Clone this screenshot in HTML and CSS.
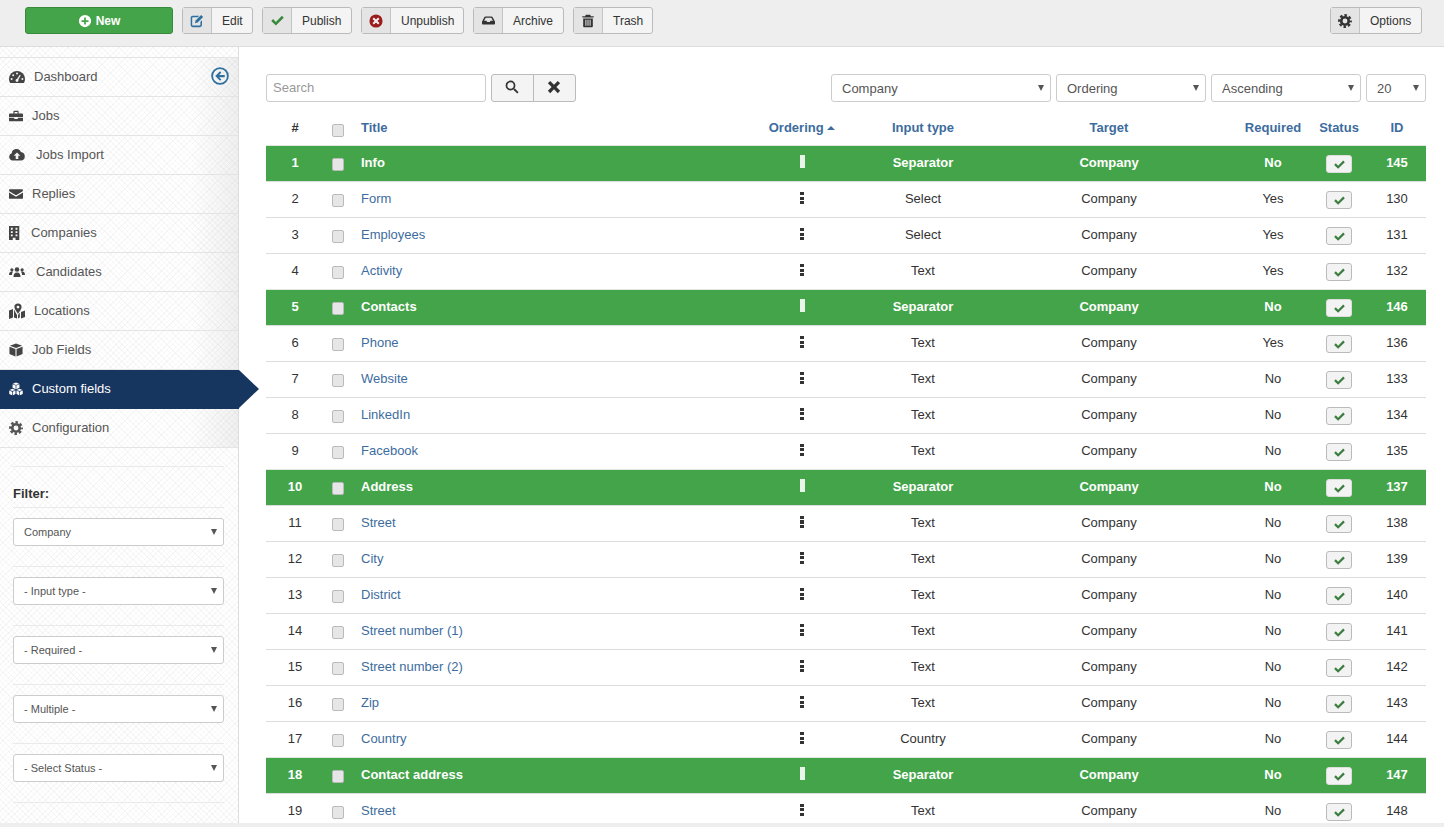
FILE: index.html
```html
<!DOCTYPE html>
<html lang="en">
<head>
<meta charset="utf-8">
<title>Custom fields</title>
<link rel="stylesheet" href="styles.css">
</head>
<body>
<svg class="defs" aria-hidden="true">
  <symbol id="i-dash" viewBox="0 0 16 16" preserveAspectRatio="xMinYMid"><path d="M8 2A8 8 0 0 0 0 10c0 1.500.4 2.900 1.100 4h13.800c.7-1.100 1.100-2.500 1.100-4A8 8 0 0 0 8 2z"/><g class="hole"><circle cx="8" cy="4.600" r="1"/><circle cx="4.200" cy="6.200" r="1"/><circle cx="2.600" cy="10" r="1"/><circle cx="13.400" cy="10" r="1"/><circle cx="8" cy="11.500" r="1.400"/><path d="M7.300 11l3.500-5.300.9.500-2.900 5.600z"/></g></symbol>
  <symbol id="i-jobs" viewBox="0 0 16 16" preserveAspectRatio="xMinYMid"><path d="M1 5h14a1 1 0 0 1 1 1v3H0V6a1 1 0 0 1 1-1zM0 10h6v1.500h4V10h6v3a1 1 0 0 1-1 1H1a1 1 0 0 1-1-1zM5 5V3.200C5 2.500 5.500 2 6.200 2h3.600c.7 0 1.200.5 1.200 1.200V5H9.700V3.300H6.300V5z"/></symbol>
  <symbol id="i-cloud" viewBox="0 0 16 16" preserveAspectRatio="xMinYMid"><path d="M3.700 13.500a3.700 3.700 0 0 1-1-7.200 4.800 4.800 0 0 1 9.200-1.300 4.300 4.300 0 0 1 .4 8.500z"/><path class="hole" d="M8 5.500l3.300 3.300H9.300V12H6.700V8.800H4.700z"/></symbol>
  <symbol id="i-mail" viewBox="0 0 16 16" preserveAspectRatio="xMinYMid"><path d="M1.200 2.500h13.600c.7 0 1.200.5 1.200 1.200 0 .6-.4 1-.8 1.300L8.600 9.100c-.4.2-.8.200-1.200 0L.8 5C.4 4.700 0 4.300 0 3.700c0-.7.5-1.200 1.200-1.200zM0 6.200l7 4.300c.6.4 1.400.4 2 0l7-4.300v6.300c0 .6-.5 1-1.200 1H1.200c-.7 0-1.200-.4-1.200-1z"/></symbol>
  <symbol id="i-build" viewBox="2.500 .5 11 15" preserveAspectRatio="xMinYMid"><path fill-rule="evenodd" d="M2.500 .5h11v15H9.500v-2.500h-3v2.500h-4zM4.500 2.500v2h2v-2zM9.500 2.500v2h2v-2zM4.500 6v2h2V6zM9.500 6v2h2V6zM4.500 9.500v2h2v-2zM9.500 9.500v2h2v-2z"/></symbol>
  <symbol id="i-users" viewBox="0 0 16 16" preserveAspectRatio="xMinYMid"><circle cx="8" cy="5.500" r="2.300"/><circle cx="2.900" cy="5.800" r="1.600"/><circle cx="13.100" cy="5.800" r="1.600"/><path d="M4.500 13c0-3 1-4.500 3.500-4.500s3.500 1.500 3.500 4.500zM0 11c0-2.300.8-3.600 3-3.500.5 0 .8.100 1 .3-.8.800-1 2-1 3.200zM16 11c0-2.300-.8-3.600-3-3.500-.5 0-.8.100-1 .3.800.8 1 2 1 3.200z"/></symbol>
  <symbol id="i-map" viewBox="0 0 16 16" preserveAspectRatio="xMinYMid"><path d="M0 7.500l4-1.500v8.500L0 16zM5 6.500l1.500 3 1.500 2.500v3.500L5 14.500zM9 12l1.800-2.500V14.500L9 15.500zM12 9l4-1.500V14l-4 1.500z"/><path fill-rule="evenodd" d="M9 .5a3.600 3.600 0 0 1 3.600 3.600c0 1.800-2.100 4.700-3.600 6.600-1.500-1.900-3.600-4.800-3.600-6.600A3.600 3.600 0 0 1 9 .5zM9 2.700a1.400 1.400 0 1 0 0 2.800 1.400 1.400 0 0 0 0-2.800z"/></symbol>
  <symbol id="i-cube" viewBox="0 0 16 16" preserveAspectRatio="xMinYMid"><path d="M8 .5l7 2.500L8 5.600 1 3zM.5 4.200l6.900 2.600v8.700L.5 12.500zM15.500 4.200v8.300l-6.900 3V6.800z"/></symbol>
  <symbol id="i-cubes" viewBox="0 0 16 16" preserveAspectRatio="xMinYMid"><path d="M8 .5l3.600 1.400L8 3.300 4.400 1.900zM4.100 2.700l3.500 1.300v4.200L4.100 6.700zM11.900 2.700v4l-3.500 1.500V4zM4 7.700l3.300 1.300L4 10.300.7 9zM.3 9.800l3.300 1.300v3.900L.3 13.600zM7.400 9.800v3.800L4.400 15v-3.900zM12 7.700L15.300 9 12 10.300 8.700 9zM8.600 9.800l3 1.300v3.900l-3-1.400zM15.700 9.800v3.800L12.400 15v-3.900z"/></symbol>
  <symbol id="i-cog" viewBox="0 0 16 16" preserveAspectRatio="xMinYMid"><circle cx="8" cy="8" r="4.300" fill="none" stroke="currentColor" stroke-width="3"/><circle cx="8" cy="8" r="6.600" fill="none" stroke="currentColor" stroke-width="2.600" stroke-dasharray="2.900 2.284" stroke-dashoffset="1.450"/></symbol>
  <symbol id="i-back" viewBox="0 0 16 16"><circle cx="8" cy="8" r="7" fill="none" stroke="currentColor" stroke-width="1.600"/><path d="M8 3.800l1.200 1.200-2 2h5v2h-5l2 2L8 12.200 3.800 8z"/></symbol>
  <symbol id="i-plus" viewBox="0 0 16 16"><path fill-rule="evenodd" d="M8 1a7 7 0 1 1 0 14A7 7 0 0 1 8 1zM7 4v3H4v2h3v3h2V9h3V7H9V4z"/></symbol>
  <symbol id="i-edit" viewBox="0 0 16 16"><path d="M3 2h7.500L9 3.800H3.200c-.4 0-.7.300-.7.700v8c0 .4.300.7.700.7h8c.4 0 .7-.3.700-.7V8.800l1.800-1.700v5.600C13.700 14 12.700 15 11.500 15H3C1.800 15 .8 14 .8 12.700V4.200C.8 3 1.800 2 3 2z"/><path d="M12.700 1.200l2.300 2.300-6.300 6.300-3 .7.700-3z"/></symbol>
  <symbol id="i-check" viewBox="0 0 16 16"><path d="M2.600 6.300l3.400 3.400 7.400-7.400 2.300 2.300L6 14.300.3 8.600z"/></symbol>
  <symbol id="i-xc" viewBox="0 0 16 16"><circle cx="8" cy="8" r="7.500"/><path class="hole-w" d="M5.600 4l2.400 2.400L10.400 4 12 5.600 9.600 8l2.400 2.400-1.600 1.600L8 9.600 5.600 12 4 10.400 6.400 8 4 5.600z"/></symbol>
  <symbol id="i-arch" viewBox="0 0 16 16"><path fill-rule="evenodd" d="M4.300 3h7.400c.6 0 1 .3 1.300.8L15.600 8.500c.3.400.4.800.4 1.200V12c0 .6-.5 1-1 1H1c-.5 0-1-.4-1-1V9.700c0-.4.100-.8.400-1.200L3 3.800c.3-.5.700-.8 1.300-.8zM4.600 4.500L2.500 8.300h3l.9 1.500h3.200l.9-1.500h3l-2.100-3.800z"/></symbol>
  <symbol id="i-trash" viewBox="0 0 16 16"><path fill-rule="evenodd" d="M5.500 .8h5l.8 1.700h3.200V4h-13V2.500h3.200zM2.500 5h11v9c0 .8-.6 1.200-1.200 1.200H3.700c-.6 0-1.200-.4-1.200-1.200zM5 6.500v7h1.200v-7zM7.400 6.500v7h1.200v-7zM9.800 6.500v7H11v-7z"/></symbol>
  <symbol id="i-search" viewBox="0 0 16 16"><circle cx="6.300" cy="6.300" r="4.600" fill="none" stroke="currentColor" stroke-width="2"/><path d="M9.500 11l1.500-1.500 4.500 4.500-1.500 1.500z"/></symbol>
  <symbol id="i-x" viewBox="0 0 16 16"><path d="M3.700 1L8 5.300 12.300 1 15 3.700 10.700 8l4.300 4.300-2.700 2.700L8 10.700 3.700 15 1 12.300 5.300 8 1 3.700z"/></symbol>
</svg>

<header class="toolbar">
  <button class="new-btn"><svg class="ic-14"><use href="#i-plus"/></svg>New</button>
  <button class="tb-btn bw-edit"><span class="tb-ic c-blue"><svg class="ic-14"><use href="#i-edit"/></svg></span><span class="tb-tx">Edit</span></button>
  <button class="tb-btn bw-pub"><span class="tb-ic c-green"><svg class="ic-13"><use href="#i-check"/></svg></span><span class="tb-tx">Publish</span></button>
  <button class="tb-btn bw-unp"><span class="tb-ic c-red"><svg class="ic-14"><use href="#i-xc"/></svg></span><span class="tb-tx">Unpublish</span></button>
  <button class="tb-btn bw-arc"><span class="tb-ic"><svg class="ic-13"><use href="#i-arch"/></svg></span><span class="tb-tx">Archive</span></button>
  <button class="tb-btn bw-tra"><span class="tb-ic"><svg class="ic-14"><use href="#i-trash"/></svg></span><span class="tb-tx">Trash</span></button>
  <button class="tb-btn bw-opt options"><span class="tb-ic"><svg class="ic-14"><use href="#i-cog"/></svg></span><span class="tb-tx">Options</span></button>
</header>

<div class="main">
  <aside class="sidebar">
    <nav class="menu">
      <a class="menu-item"><svg class="mi w15"><use href="#i-dash"/></svg>Dashboard<svg class="collapse"><use href="#i-back"/></svg></a>
      <a class="menu-item"><svg class="mi w13"><use href="#i-jobs"/></svg>Jobs</a>
      <a class="menu-item"><svg class="mi w17"><use href="#i-cloud"/></svg>Jobs Import</a>
      <a class="menu-item"><svg class="mi w13"><use href="#i-mail"/></svg>Replies</a>
      <a class="menu-item"><svg class="mi w12"><use href="#i-build"/></svg>Companies</a>
      <a class="menu-item"><svg class="mi w17"><use href="#i-users"/></svg>Candidates</a>
      <a class="menu-item"><svg class="mi w15"><use href="#i-map"/></svg>Locations</a>
      <a class="menu-item"><svg class="mi w13"><use href="#i-cube"/></svg>Job Fields</a>
      <a class="menu-item active"><svg class="mi w13"><use href="#i-cubes"/></svg>Custom fields</a>
      <a class="menu-item"><svg class="mi w13"><use href="#i-cog"/></svg>Configuration</a>
    </nav>
    <div class="filters">
      <h4 class="filter-title">Filter:</h4>
      <div class="filter-group"><div class="sel sel-side"><select><option>Company</option></select></div></div>
      <div class="filter-group"><div class="sel sel-side"><select><option>- Input type -</option></select></div></div>
      <div class="filter-group"><div class="sel sel-side"><select><option>- Required -</option></select></div></div>
      <div class="filter-group"><div class="sel sel-side"><select><option>- Multiple -</option></select></div></div>
      <div class="filter-group"><div class="sel sel-side"><select><option>- Select Status -</option></select></div></div>
      <div class="filter-end"></div>
    </div>
  </aside>

  <main class="content">
    <div class="search-row">
      <input class="search" type="text" placeholder="Search">
      <div class="search-btns">
        <button class="sb"><svg class="ic-14"><use href="#i-search"/></svg></button>
        <button class="sb"><svg class="ic-14"><use href="#i-x"/></svg></button>
      </div>
      <div class="sorts">
        <div class="sel w220"><select><option>Company</option></select></div>
        <div class="sel w150"><select><option>Ordering</option></select></div>
        <div class="sel w150"><select><option>Ascending</option></select></div>
        <div class="sel w60"><select><option>20</option></select></div>
      </div>
    </div>

    <table class="grid">
      <colgroup>
        <col class="c-num"><col class="c-chk"><col class="c-title"><col class="c-ord"><col class="c-type"><col class="c-target"><col class="c-req"><col class="c-st"><col class="c-id">
      </colgroup>
      <thead>
        <tr>
          <th>#</th><th><input class="cb" type="checkbox"></th><th class="left">Title</th><th>Ordering <i class="caret"></i></th><th>Input type</th><th>Target</th><th>Required</th><th>Status</th><th>ID</th>
        </tr>
      </thead>
      <tbody>
        <tr class="sep"><td>1</td><td><input class="cb" type="checkbox"></td><td class="left">Info</td><td><i class="drag"></i></td><td>Separator</td><td>Company</td><td>No</td><td><span class="st"><svg><use href="#i-check"/></svg></span></td><td>145</td></tr>
        <tr><td>2</td><td><input class="cb" type="checkbox"></td><td class="left"><a>Form</a></td><td><i class="drag"></i></td><td>Select</td><td>Company</td><td>Yes</td><td><span class="st"><svg><use href="#i-check"/></svg></span></td><td>130</td></tr>
        <tr><td>3</td><td><input class="cb" type="checkbox"></td><td class="left"><a>Employees</a></td><td><i class="drag"></i></td><td>Select</td><td>Company</td><td>Yes</td><td><span class="st"><svg><use href="#i-check"/></svg></span></td><td>131</td></tr>
        <tr><td>4</td><td><input class="cb" type="checkbox"></td><td class="left"><a>Activity</a></td><td><i class="drag"></i></td><td>Text</td><td>Company</td><td>Yes</td><td><span class="st"><svg><use href="#i-check"/></svg></span></td><td>132</td></tr>
        <tr class="sep"><td>5</td><td><input class="cb" type="checkbox"></td><td class="left">Contacts</td><td><i class="drag"></i></td><td>Separator</td><td>Company</td><td>No</td><td><span class="st"><svg><use href="#i-check"/></svg></span></td><td>146</td></tr>
        <tr><td>6</td><td><input class="cb" type="checkbox"></td><td class="left"><a>Phone</a></td><td><i class="drag"></i></td><td>Text</td><td>Company</td><td>Yes</td><td><span class="st"><svg><use href="#i-check"/></svg></span></td><td>136</td></tr>
        <tr><td>7</td><td><input class="cb" type="checkbox"></td><td class="left"><a>Website</a></td><td><i class="drag"></i></td><td>Text</td><td>Company</td><td>No</td><td><span class="st"><svg><use href="#i-check"/></svg></span></td><td>133</td></tr>
        <tr><td>8</td><td><input class="cb" type="checkbox"></td><td class="left"><a>LinkedIn</a></td><td><i class="drag"></i></td><td>Text</td><td>Company</td><td>No</td><td><span class="st"><svg><use href="#i-check"/></svg></span></td><td>134</td></tr>
        <tr><td>9</td><td><input class="cb" type="checkbox"></td><td class="left"><a>Facebook</a></td><td><i class="drag"></i></td><td>Text</td><td>Company</td><td>No</td><td><span class="st"><svg><use href="#i-check"/></svg></span></td><td>135</td></tr>
        <tr class="sep"><td>10</td><td><input class="cb" type="checkbox"></td><td class="left">Address</td><td><i class="drag"></i></td><td>Separator</td><td>Company</td><td>No</td><td><span class="st"><svg><use href="#i-check"/></svg></span></td><td>137</td></tr>
        <tr><td>11</td><td><input class="cb" type="checkbox"></td><td class="left"><a>Street</a></td><td><i class="drag"></i></td><td>Text</td><td>Company</td><td>No</td><td><span class="st"><svg><use href="#i-check"/></svg></span></td><td>138</td></tr>
        <tr><td>12</td><td><input class="cb" type="checkbox"></td><td class="left"><a>City</a></td><td><i class="drag"></i></td><td>Text</td><td>Company</td><td>No</td><td><span class="st"><svg><use href="#i-check"/></svg></span></td><td>139</td></tr>
        <tr><td>13</td><td><input class="cb" type="checkbox"></td><td class="left"><a>District</a></td><td><i class="drag"></i></td><td>Text</td><td>Company</td><td>No</td><td><span class="st"><svg><use href="#i-check"/></svg></span></td><td>140</td></tr>
        <tr><td>14</td><td><input class="cb" type="checkbox"></td><td class="left"><a>Street number (1)</a></td><td><i class="drag"></i></td><td>Text</td><td>Company</td><td>No</td><td><span class="st"><svg><use href="#i-check"/></svg></span></td><td>141</td></tr>
        <tr><td>15</td><td><input class="cb" type="checkbox"></td><td class="left"><a>Street number (2)</a></td><td><i class="drag"></i></td><td>Text</td><td>Company</td><td>No</td><td><span class="st"><svg><use href="#i-check"/></svg></span></td><td>142</td></tr>
        <tr><td>16</td><td><input class="cb" type="checkbox"></td><td class="left"><a>Zip</a></td><td><i class="drag"></i></td><td>Text</td><td>Company</td><td>No</td><td><span class="st"><svg><use href="#i-check"/></svg></span></td><td>143</td></tr>
        <tr><td>17</td><td><input class="cb" type="checkbox"></td><td class="left"><a>Country</a></td><td><i class="drag"></i></td><td>Country</td><td>Company</td><td>No</td><td><span class="st"><svg><use href="#i-check"/></svg></span></td><td>144</td></tr>
        <tr class="sep"><td>18</td><td><input class="cb" type="checkbox"></td><td class="left">Contact address</td><td><i class="drag"></i></td><td>Separator</td><td>Company</td><td>No</td><td><span class="st"><svg><use href="#i-check"/></svg></span></td><td>147</td></tr>
        <tr><td>19</td><td><input class="cb" type="checkbox"></td><td class="left"><a>Street</a></td><td><i class="drag"></i></td><td>Text</td><td>Company</td><td>No</td><td><span class="st"><svg><use href="#i-check"/></svg></span></td><td>148</td></tr>
      </tbody>
    </table>
  </main>
</div>
<footer class="foot"></footer>
</body>
</html>
```

FILE: styles.css
```css
* { box-sizing: border-box; }
html, body { margin: 0; height: 100%; }
body {
  height: 827px;
  overflow: hidden;
  display: flex;
  flex-direction: column;
  font: 13px/18px "Liberation Sans", Arial, sans-serif;
  color: #333;
  background: #fff;
}
.defs { display: none; }
.hole { fill: #f5f5f5; }
.hole-w { fill: #f0f0f0; }
button { font-family: inherit; }

/* toolbar */
.toolbar {
  flex: none;
  height: 47px;
  display: flex;
  align-items: flex-start;
  gap: 9px;
  padding: 7px 22px 0 25px;
  background: #eee;
  border-bottom: 1px solid #ddd;
}
.new-btn {
  width: 148px;
  height: 27px;
  display: flex;
  align-items: center;
  justify-content: center;
  gap: 4px;
  padding: 0;
  background: #44a449;
  border: 1px solid #3a8a3e;
  border-radius: 3px;
  color: #fff;
  font-size: 12px;
  font-weight: bold;
}
.new-btn svg { fill: #fff; }
.tb-btn {
  height: 27px;
  display: flex;
  align-items: stretch;
  padding: 0;
  background: #f4f4f4;
  border: 1px solid #bbb;
  border-radius: 3px;
  color: #333;
  font-size: 12px;
}
.bw-edit { width: 71px; }
.bw-pub { width: 90px; }
.bw-unp { width: 103px; }
.bw-arc { width: 91px; }
.bw-tra { width: 80px; }
.bw-opt { width: 92px; }
.tb-ic {
  flex: none;
  width: 29px;
  display: flex;
  align-items: center;
  justify-content: center;
  background: #e4e4e4;
  border-right: 1px solid #c4c4c4;
  color: #333;
  fill: currentColor;
}
.tb-tx { padding: 0 0 0 10px; line-height: 26px; }
.options { margin-left: auto; }
.c-blue { color: #2f6f9f; }
.c-green { color: #3a8a3e; }
.c-red { color: #9b1c1c; }
.ic-14 { width: 14px; height: 14px; }
.ic-13 { width: 13px; height: 13px; }

/* layout */
.main { flex: 1; min-height: 0; display: flex; overflow: hidden; }
.foot { flex: none; height: 4px; background: #eee; }

/* sidebar */
.sidebar {
  flex: none;
  width: 239px;
  position: relative;
  z-index: 2;
  padding-top: 10px;
  border-right: 1px solid #ddd;
  background-color: #fff;
  background-image:
    repeating-linear-gradient(45deg, rgba(0,0,0,.028) 0 1px, transparent 1px 4px),
    repeating-linear-gradient(-45deg, rgba(0,0,0,.028) 0 1px, transparent 1px 4px);
}
.menu { border-top: 1px solid #e4e4e4; }
.menu-item {
  height: 39px;
  display: flex;
  align-items: center;
  gap: 9px;
  padding: 0 9px;
  position: relative;
  color: #555;
  fill: #444;
  border-bottom: 1px solid #e4e4e4;
  background: linear-gradient(to right, transparent 80%, rgba(0,0,0,.06));
}
.menu-item.active {
  height: 39px;
  margin-right: -1px;
  padding-bottom: 2px;
  color: #fff;
  fill: #fff;
  background: #17365f;
  border-bottom: 0;
}
.menu-item.active::after {
  content: "";
  position: absolute;
  left: 100%;
  top: 0;
  border-style: solid;
  border-width: 19.500px 0 19.500px 20px;
  border-color: transparent transparent transparent #17365f;
}
.mi { flex: none; height: 16px; }
.mi.w12 { width: 13px; height: 14px; }
.w13 { width: 14px; }
.w15 { width: 16px; }
.w17 { width: 18px; }
.collapse {
  width: 18px;
  height: 18px;
  fill: #2f6f9f;
  color: #2f6f9f;
  position: absolute;
  right: 9px;
  top: 9px;
}
.filters { margin: 18px 14px 0 13px; border-top: 1px solid #eaeaea; }
.filter-title {
  margin: 0;
  height: 40px;
  padding-top: 18px;
  font-size: 13px;
  font-weight: bold;
  color: #333;
}
.filter-group { height: 59px; padding-top: 10px; border-top: 1px solid #eaeaea; }
.filter-end { border-top: 1px solid #eaeaea; }

/* selects */
.sel { position: relative; height: 28px; flex: none; }
.sel select {
  appearance: none;
  width: 100%;
  height: 28px;
  padding: 0 20px 0 10px;
  background: #fff;
  border: 1px solid #ccc;
  border-radius: 3px;
  color: #555;
  font: 13px "Liberation Sans", Arial, sans-serif;
}
.sel::after {
  content: "";
  position: absolute;
  right: 7px;
  top: 11px;
  border-style: solid;
  border-width: 6px 3px 0;
  border-color: #555 transparent transparent;
  pointer-events: none;
}
.sel-side select { font-size: 11px; color: #555; padding-bottom: 1px; }
.w220 { width: 220px; }
.w150 { width: 150px; }
.w60 { width: 60px; }

/* content */
.content { flex: 1; min-width: 0; padding: 27px 18px 0 27px; }
.search-row { display: flex; height: 28px; margin-bottom: 8px; }
.search {
  width: 220px;
  height: 28px;
  padding: 0 6px 2px;
  border: 1px solid #ccc;
  border-radius: 3px;
  font: 13px "Liberation Sans", Arial, sans-serif;
}
.search::placeholder { color: #999; opacity: 1; }
.search-btns { display: flex; margin-left: 5px; }
.sb {
  width: 43px;
  height: 28px;
  padding: 0 2px 2px 0;
  display: flex;
  align-items: center;
  justify-content: center;
  background: #f4f4f4;
  border: 1px solid #bbb;
  fill: #333;
  color: #333;
}
.sb:first-child { border-radius: 3px 0 0 3px; }
.sb + .sb { margin-left: -1px; border-radius: 0 3px 3px 0; }
.sorts { display: flex; gap: 5px; margin-left: auto; }

/* table */
.grid {
  width: 1160px;
  table-layout: fixed;
  border-collapse: separate;
  border-spacing: 0;
}
.c-num { width: 58px; }
.c-chk { width: 28px; }
.c-title { width: 388px; }
.c-ord { width: 124px; }
.c-type { width: 118px; }
.c-target { width: 254px; }
.c-req { width: 74px; }
.c-st { width: 58px; }
.c-id { width: 58px; }
.grid th, .grid td {
  padding: 8px 0 0;
  vertical-align: top;
  text-align: center;
  font-size: 13px;
  line-height: 18px;
}
.grid th {
  height: 35px;
  padding-top: 9px;
  color: #3d6c9e;
  font-weight: bold;
}
.grid th:first-child { color: #333; }
.grid td { height: 36px; border-top: 1px solid #ddd; }
.grid .left { text-align: left; padding-left: 9px; }
.grid td a { color: #3d6c9e; }
.sep td { background: #44a449; color: #fff; font-weight: bold; border-top-color: #dfe8df; }
.cb {
  appearance: none;
  display: block;
  width: 12px;
  height: 13px;
  margin: 4px auto 0 8px;
  background: #e6e6e6;
  border: 1px solid #bbb;
  border-radius: 2px;
}
th .cb { margin-top: 5px; }
.caret {
  display: inline-block;
  vertical-align: 2px;
  border-style: solid;
  border-width: 0 4px 4px;
  border-color: transparent transparent #3d6c9e;
}
.drag {
  display: block;
  width: 4px;
  height: 12px;
  margin: 2px auto 0;
  background: repeating-linear-gradient(to bottom, #333 0 3px, transparent 3px 4.500px);
}
.sep .drag { width: 5px; height: 13px; margin-top: 1px; background: #e8f5e9; }
.st {
  width: 26px;
  height: 18px;
  margin: 1px auto 0;
  display: flex;
  align-items: center;
  justify-content: center;
  background: #f3f3f3;
  border: 1px solid #bbb;
  border-radius: 3px;
}
.st svg { width: 11px; height: 11px; fill: #3a7d3e; }
.sep .st { border-color: #ddd; }
```
